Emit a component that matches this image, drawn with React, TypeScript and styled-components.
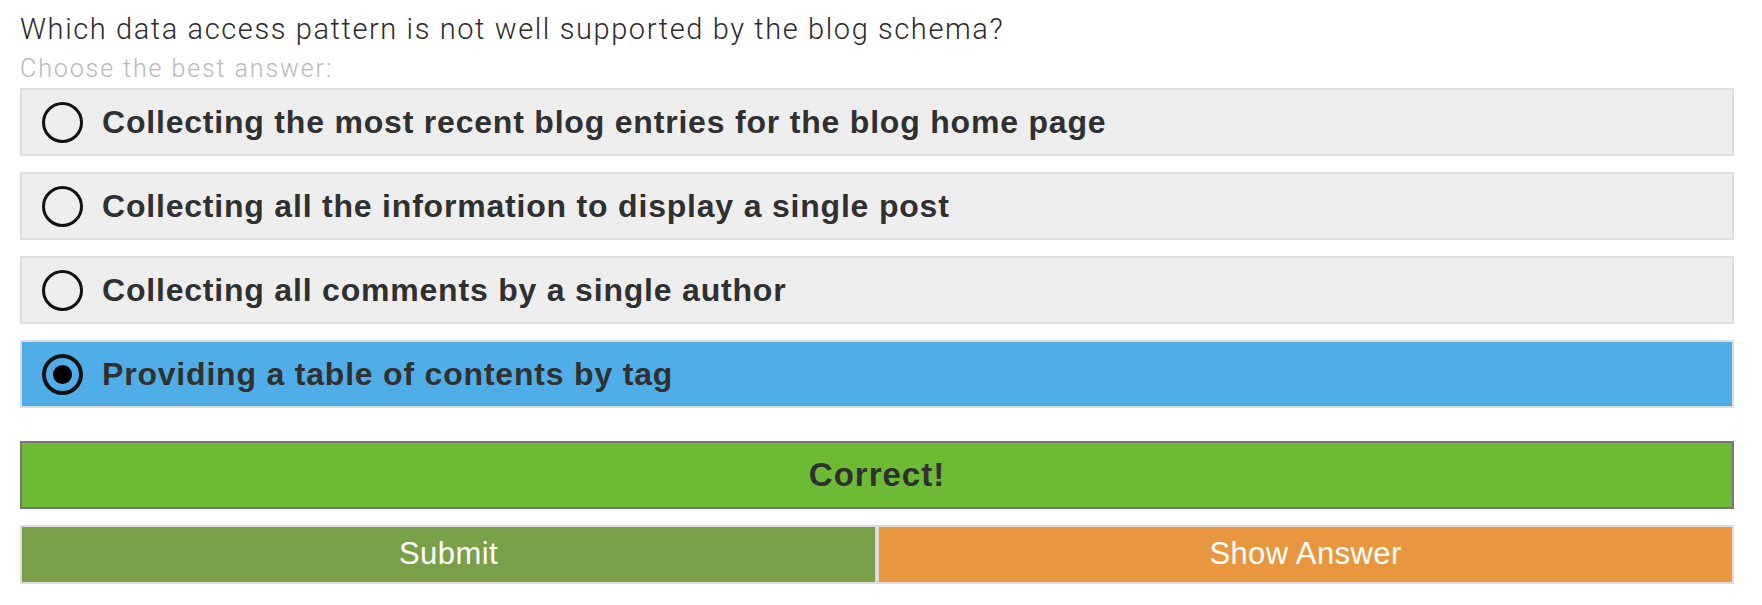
import React, { useState } from "react";
import styled, { createGlobalStyle, css } from "styled-components";

const GlobalStyle = createGlobalStyle`
  body {
    margin: 0;
    background: #fff;
    font-family: "Liberation Sans", Arial, sans-serif;
  }
`;

export type Choice = {
  id: string;
  text: string;
};

const choices: Choice[] = [
  { id: "a", text: "Collecting the most recent blog entries for the blog home page" },
  { id: "b", text: "Collecting all the information to display a single post" },
  { id: "c", text: "Collecting all comments by a single author" },
  { id: "d", text: "Providing a table of contents by tag" },
];

const Quiz = styled.div`
  padding: 12px 28px 0 20px;
`;

const Question = styled.p`
  margin: 0;
  font-family: Roboto, "Liberation Sans", sans-serif;
  font-weight: 300;
  font-size: 29px;
  line-height: 34px;
  letter-spacing: 1.6px;
  color: #2b2b2b;
`;

const Hint = styled.p`
  margin: 7px 0 0;
  font-family: Roboto, "Liberation Sans", sans-serif;
  font-weight: 300;
  font-size: 25px;
  line-height: 32px;
  letter-spacing: 1.9px;
  color: #b9b9b9;
`;

const ChoiceList = styled.ul`
  list-style: none;
  margin: 3px 0 0;
  padding: 0;
  display: flex;
  flex-direction: column;
  gap: 16px;
`;

const ChoiceItem = styled.li<{ $selected: boolean }>`
  box-sizing: border-box;
  height: 68px;
  display: flex;
  align-items: center;
  gap: 19px;
  padding-left: 20px;
  border: 2px solid #dddddd;
  background-color: ${(p) => (p.$selected ? "#4faee8" : "#eeeeee")};
  cursor: pointer;
`;

const Radio = styled.span<{ $checked: boolean }>`
  box-sizing: border-box;
  width: 41px;
  height: 41px;
  flex: none;
  border-radius: 50%;
  border: ${(p) => (p.$checked ? "4px" : "3.5px")} solid #111;
  display: flex;
  align-items: center;
  justify-content: center;
  ${(p) =>
    p.$checked &&
    css`
      &::after {
        content: "";
        width: 19px;
        height: 19px;
        border-radius: 50%;
        background: #000;
      }
    `}
`;

const ChoiceText = styled.span`
  font-weight: 700;
  font-size: 32px;
  letter-spacing: 0.8px;
  color: #303030;
`;

const Result = styled.div`
  box-sizing: border-box;
  margin-top: 33px;
  height: 68px;
  border: 2px solid #777777;
  background-color: #6dba35;
  display: flex;
  align-items: center;
  justify-content: center;
  font-weight: 700;
  font-size: 33px;
  letter-spacing: 1px;
  color: #303030;
`;

const Actions = styled.div`
  margin-top: 16px;
  display: grid;
  grid-template-columns: 1fr 1fr;
`;

const ActionButton = styled.button<{ $tone: "submit" | "answer" }>`
  box-sizing: border-box;
  height: 59px;
  margin: 0;
  border: 2px solid #dddddd;
  border-radius: 0;
  background-color: ${(p) => (p.$tone === "submit" ? "#7aa049" : "#e9973f")};
  color: #fff;
  font-family: "Liberation Sans", Arial, sans-serif;
  font-size: 31px;
  letter-spacing: 0.4px;
  padding: 0 0 2px;
  cursor: pointer;
`;

export default function App() {
  const [selected, setSelected] = useState("d");

  return (
    <>
      <GlobalStyle />
      <Quiz>
        <Question>Which data access pattern is not well supported by the blog schema?</Question>
        <Hint>Choose the best answer:</Hint>
        <ChoiceList>
          {choices.map((c) => (
            <ChoiceItem key={c.id} $selected={selected === c.id} onClick={() => setSelected(c.id)}>
              <Radio $checked={selected === c.id} />
              <ChoiceText>{c.text}</ChoiceText>
            </ChoiceItem>
          ))}
        </ChoiceList>
        <Result>Correct!</Result>
        <Actions>
          <ActionButton $tone="submit">Submit</ActionButton>
          <ActionButton $tone="answer">Show Answer</ActionButton>
        </Actions>
      </Quiz>
    </>
  );
}
